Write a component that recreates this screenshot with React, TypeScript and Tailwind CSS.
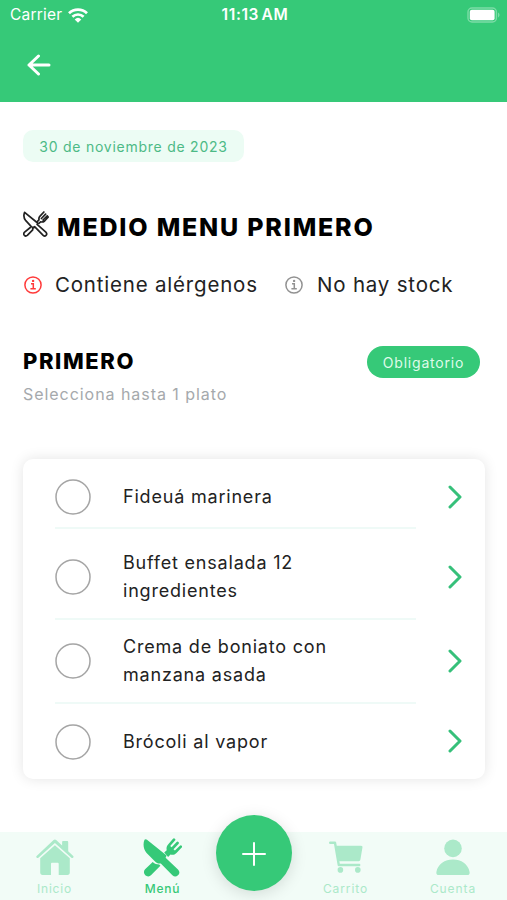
import type React from "react"
import { useState } from "react"

interface Dish {
  name: string
  rowClass: string
  divider: boolean
}

const dishes: Dish[] = [
  { name: "Fideuá marinera", rowClass: "h-[62px]", divider: true },
  { name: "Buffet ensalada 12 ingredientes", rowClass: "mt-[7px] h-[84px]", divider: true },
  { name: "Crema de boniato con manzana asada", rowClass: "h-[84px]", divider: true },
  { name: "Brócoli al vapor", rowClass: "h-[76px]", divider: false },
]

const CutleryIcon: React.FC<{ className?: string }> = ({ className }) => (
  <svg viewBox="0 0 39 39" className={className} fill="currentColor">
    <path d="M1.5 1.8C2.2.9 3.2 1 4 1.7L23.6 17.4l-1 2.4L35 31.6a3.9 3.9 0 0 1-5.6 5.6L17.8 25.4c-2.5.4-4.3-.5-6-2.2L3.6 15C.3 11.3-.2 5.4 1.5 1.8Z" />
    <path d="M9.7 24.1c2.2 1.8 4 2.4 6.5 2.4l1.2 1.3-9.2 9.3a4.2 4.2 0 0 1-6.1-5.8Z" />
    <path d="m21.2 14.4 2.5-2.1c-.5-2.4 0-4.3 1.6-6L30 .8a1.3 1.3 0 0 1 2 1.8l-4.8 5.5 1.4 1.2 5-5.2a1.3 1.3 0 0 1 1.9 1.8l-5 5.3 1.4 1.3 5-4.8a1.3 1.3 0 0 1 1.8 1.9l-5.2 5.3c-1.8 1.8-3.7 2.3-6 1.6l-2.4 2.4Z" />
  </svg>
)

const CutleryOutlineIcon: React.FC = () => (
  <svg viewBox="0 0 26 26" className="h-[26px] w-[26px]" fill="none" stroke="#222" strokeWidth="1.7" strokeLinecap="round" strokeLinejoin="round">
    <path d="m7.3 16.5-6 4.9c-1.7 2.3 1 4.6 3 3l5.4-5.5v-1.6l1.8-1.6" />
    <path d="m14.2 10.6 1.8-1.8c-.4-1.7.1-2.7 1-3.6L20.9 1M18.4 7.5l4.2-4.3M20 9l4.3-4.2M15.9 12.4l1.7-1.6c1.8.5 2.9.1 4-.8L25.3 6" />
    <path d="M1.6 1.4 14.6 12l-.5 1.4 9 8c1.7 2.2-.9 4.7-2.9 3l-8.1-8.3c-1.5.8-2.9.4-4-.7L2.8 9.7C.8 7.3.7 3.6 1.6 1.4Z" />
  </svg>
)

const HomeIcon: React.FC = () => (
  <svg viewBox="0 0 38 37" className="h-[37px] w-[38px]" fill="currentColor">
    <path d="M18.9.4a2 2 0 0 0-1.3.6L.6 16.9c-1 1 .6 2.9 1.8 1.9L18.9 4l16.5 14.8c1.2 1 2.8-.9 1.8-1.9l-5-4.7V3.2c0-.8-.4-1.2-1.2-1.2h-3.7c-.8 0-1.2.4-1.2 1.2v3.3L20.2 1a2 2 0 0 0-1.3-.6Z" />
    <path d="M18.9 6.2 4.2 19.3v14.2c0 1.6.9 2.4 2.4 2.4H15V25c0-.9.4-1.3 1.3-1.3h5.1c.9 0 1.3.4 1.3 1.3v10.9h8.7c1.6 0 2.4-.8 2.4-2.4V19.3Z" />
  </svg>
)

const CartIcon: React.FC = () => (
  <svg viewBox="0 0 34 32" className="h-8 w-[34px]" fill="none" stroke="currentColor">
    <path d="M1.2 1.8H6L9.8 24h20.4" strokeWidth="2.4" strokeLinecap="round" strokeLinejoin="round" />
    <path d="M7 4.8h25c1.2 0 1.7.7 1.4 1.9l-2 11.9c-.2 1-.8 1.7-1.8 1.7H9.8Z" fill="currentColor" stroke="none" />
    <circle cx="11.4" cy="28.9" r="2.8" fill="currentColor" stroke="none" />
    <circle cx="28.8" cy="28.9" r="2.8" fill="currentColor" stroke="none" />
  </svg>
)

const UserIcon: React.FC = () => (
  <svg viewBox="0 0 34 37" className="h-[37px] w-[34px]" fill="currentColor">
    <circle cx="17" cy="9.4" r="8.8" />
    <path d="M17 20.6c8.2 0 15.1 4.6 16.6 12.3.4 1.9-.6 3.1-2.3 3.1H2.7C1 36 0 34.8.4 32.9 1.9 25.2 8.8 20.6 17 20.6Z" />
  </svg>
)

const InfoIcon: React.FC<{ className?: string }> = ({ className }) => (
  <svg viewBox="0 0 18 18" className={`h-[18px] w-[18px] ${className}`} fill="none" stroke="currentColor" strokeWidth="1.5">
    <circle cx="9" cy="9" r="8.1" />
    <path d="M7 7.7h2.3v5M6.4 12.8h5.4" />
    <circle cx="9.1" cy="4.9" r="1.2" fill="currentColor" stroke="none" />
  </svg>
)

const StatusBar: React.FC = () => (
  <div className="grid h-[30px] grid-cols-3 items-center pl-[10px] pr-[7px] text-white">
    <div className="flex items-center gap-[6px]">
      <span className="text-[15.5px] tracking-[0.2px]">Carrier</span>
      <svg viewBox="0 0 20 15" className="h-[15px] w-5" fill="none" stroke="currentColor" strokeWidth="2.7">
        <path d="M1 5.3a12.8 12.8 0 0 1 18 0M4.4 8.8a8 8 0 0 1 11.2 0" />
        <path d="M6.7 11.4a4.8 4.8 0 0 1 6.6 0L10 14.7Z" fill="currentColor" stroke="none" />
      </svg>
    </div>
    <span className="text-center text-[15.5px] font-semibold tracking-[0.6px] whitespace-nowrap [word-spacing:-2px]">11:13 AM</span>
    <svg viewBox="0 0 33 16" className="h-4 w-[33px] justify-self-end" fill="none">
      <rect x="1" y="1" width="28.4" height="14" rx="4" stroke="#7cdca6" strokeWidth="1.4" />
      <rect x="2.8" y="2.8" width="24.8" height="10.4" rx="2" fill="white" />
      <path d="M31 5.6v4.8c2-.8 2-4 0-4.8Z" fill="#7cdca6" />
    </svg>
  </div>
)

const DishRow: React.FC<{ dish: Dish; checked: boolean; onSelect: () => void }> = ({ dish, checked, onSelect }) => (
  <div className={`flex pl-8 ${dish.rowClass}`}>
    <div
      className={`flex w-[361px] items-center gap-8 ${dish.divider ? "border-b-2 border-[#effaf7]" : ""}`}
      onClick={onSelect}
    >
      <svg viewBox="0 0 36 36" className="h-9 w-9 shrink-0" fill={checked ? "#36c978" : "none"} stroke="#a5a5a5" strokeWidth="1.5">
        <circle cx="18" cy="18" r="17" />
      </svg>
      <span className="w-[240px] text-[18px] leading-7 tracking-[0.8px] text-[#222]">{dish.name}</span>
    </div>
    <svg viewBox="0 0 14 24" className="-mt-[2px] ml-8 h-6 w-[14px] self-center" fill="none" stroke="#36c07a" strokeWidth="3" strokeLinecap="round" strokeLinejoin="round">
      <path d="m2 2 10 10L2 22" />
    </svg>
  </div>
)

const TabBar: React.FC = () => (
  <nav className="flex h-[68px] bg-[#f2fcf7] text-[12px] leading-4 text-[#abe9c9]">
    <div className="flex w-[109px] flex-col items-center pt-[7px]">
      <HomeIcon />
      <span className="mt-[5px] tracking-[0.8px]">Inicio</span>
    </div>
    <div className="flex w-[107px] flex-col items-center pt-[6px] text-[#36c978]">
      <CutleryIcon className="h-[39px] w-[39px]" />
      <span className="mt-1 font-medium tracking-[0.8px]">Menú</span>
    </div>
    <button className="-mt-[17px] flex h-[76px] w-[76px] items-center justify-center rounded-full bg-[#36c978] shadow-[0_3px_16px_rgba(0,0,0,0.13)]">
      <svg viewBox="0 0 24 24" className="mt-[2px] h-6 w-6" stroke="white" strokeWidth="2" strokeLinecap="round">
        <path d="M12 1v22M1 12h22" />
      </svg>
    </button>
    <div className="flex w-[107px] flex-col items-center pt-[9px]">
      <CartIcon />
      <span className="mt-2 tracking-[0.9px]">Carrito</span>
    </div>
    <div className="flex w-[108px] flex-col items-center pt-[7px]">
      <UserIcon />
      <span className="mt-[5px] tracking-[0.9px]">Cuenta</span>
    </div>
  </nav>
)

const App: React.FC = () => {
  const [selected, setSelected] = useState<string | null>(null)

  return (
    <div className="flex h-[900px] w-[507px] flex-col overflow-hidden bg-white font-['Inter','Liberation_Sans',sans-serif]">
      {/* Header */}
      <header className="h-[102px] bg-[#36c978]">
        <StatusBar />
        <svg viewBox="0 0 24 22" className="mt-[24px] ml-[27px] h-[22px] w-6" fill="none" stroke="white" strokeWidth="3" strokeLinecap="round" strokeLinejoin="round">
          <path d="M11.5 2 2 11l9.5 9M2 11h20" />
        </svg>
      </header>

      <main className="flex-1 px-[23px] pt-7">
        <div className="flex h-8 w-[221px] items-center justify-center rounded-[10px] bg-[#ecfcf4] text-[14px] tracking-[0.75px] whitespace-nowrap text-[#4dba86]">
          30 de noviembre de 2023
        </div>

        <div className="mt-[46px] flex h-10 items-center gap-[8px]">
          <span className="-mt-[8px]">
            <CutleryOutlineIcon />
          </span>
          <h1 className="text-[25px] font-extrabold tracking-[1.8px] whitespace-nowrap text-black">MEDIO MENU PRIMERO</h1>
        </div>

        <div className="mt-[21px] flex h-8 items-center text-[20.5px] whitespace-nowrap text-[#222]">
          <InfoIcon className="ml-px text-[#ff3a3a]" />
          <span className="ml-[13px] w-[230px] tracking-[0.8px]">Contiene alérgenos</span>
          <InfoIcon className="text-[#929292]" />
          <span className="ml-[14px] tracking-[0.8px]">No hay stock</span>
        </div>

        <div className="mt-[44px] flex justify-between pr-1">
          <div>
            <h2 className="text-[22px] leading-8 font-extrabold tracking-[1.6px] text-black">PRIMERO</h2>
            <p className="mt-[2px] text-[16px] leading-[30px] tracking-[0.95px] whitespace-nowrap text-[#a5a9ac]">Selecciona hasta 1 plato</p>
          </div>
          <span className="mt-px flex h-8 w-[113px] items-center justify-center rounded-full bg-[#36c978] text-[14px] tracking-[0.8px] text-[#dffbea]">
            Obligatorio
          </span>
        </div>

        <section className="mt-[50px] h-[320px] w-[462px] rounded-[10px] bg-white pt-2 shadow-[0_0_14px_rgba(0,0,0,0.11)]">
          {dishes.map((dish) => (
            <DishRow key={dish.name} dish={dish} checked={selected === dish.name} onSelect={() => setSelected(dish.name)} />
          ))}
        </section>
      </main>

      <TabBar />
    </div>
  )
}

export default App
